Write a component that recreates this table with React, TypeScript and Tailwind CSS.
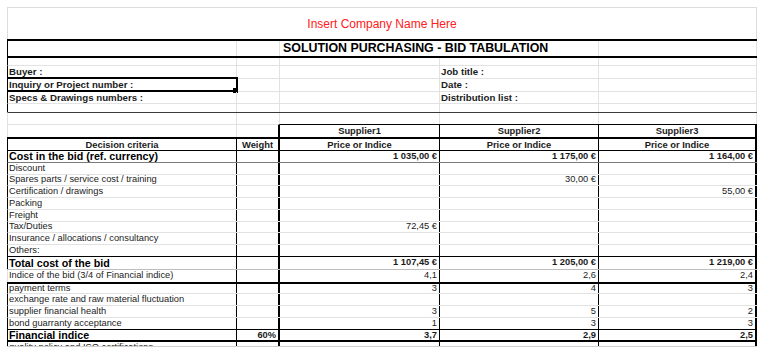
import type { ReactNode } from "react";

const COLS = "grid grid-cols-[229px_43px_160px_159px_158px]";

// gridline / border shorthands
const gT = "border-t border-t-[#e2e2e2]";
const gR = "border-r border-r-[#e2e2e2]";
const bR = "border-r border-r-black";
const bR2 = "border-r-2 border-r-black";
const gL = "border-l border-l-[#e2e2e2]";
const bL = "border-l border-l-black";

interface RowProps {
  h: string;
  top?: string;
  left: string;
  children: ReactNode;
}

const Row = ({ h, top = "", left, children }: RowProps) => (
  <div className={`${COLS} w-[750px] ${h} ${top} ${left}`}>{children}</div>
);

interface CellProps {
  className?: string;
  children?: ReactNode;
}

const Cell = ({ className = "", children }: CellProps) => (
  <div className={`flex items-center whitespace-nowrap leading-none min-w-0 ${className}`}>
    {children}
  </div>
);

interface DataRow {
  label: string;
  section?: boolean;
  h: string;
  top: string;
  left?: string;
  weight?: string;
  vals: string[];
}

const none = ["", "", ""];

const rows: DataRow[] = [
  {
    label: "Cost in the bid (ref. currency)",
    section: true,
    h: "h-[12px]",
    top: "border-t border-t-black",
    vals: ["1 035,00 €", "1 175,00 €", "1 164,00 €"],
  },
  { label: "Discount", h: "h-[12px]", top: "border-t border-t-[#7a7a7a]", vals: none },
  { label: "Spares parts / service cost / training", h: "h-[11px]", top: gT, vals: ["", "30,00 €", ""] },
  { label: "Certification / drawings", h: "h-[12px]", top: gT, vals: ["", "", "55,00 €"] },
  { label: "Packing", h: "h-[12px]", top: gT, vals: none },
  { label: "Freight", h: "h-[12px]", top: gT, vals: none },
  { label: "Tax/Duties", h: "h-[11px]", top: gT, vals: ["72,45 €", "", ""] },
  { label: "Insurance / allocations / consultancy", h: "h-[12px]", top: gT, vals: none },
  { label: "Others:", h: "h-[12px]", top: gT, vals: none },
  {
    label: "Total cost of the bid",
    section: true,
    h: "h-[13px]",
    top: "border-t border-t-black",
    vals: ["1 107,45 €", "1 205,00 €", "1 219,00 €"],
  },
  {
    label: "Indice of the bid (3/4 of Financial indice)",
    h: "h-[13px]",
    top: "border-t border-t-[#bdbdbd]",
    left: gL,
    vals: ["4,1", "2,6", "2,4"],
  },
  { label: "payment terms", h: "h-[11px]", top: "border-t-2 border-t-black", vals: ["3", "4", "3"] },
  { label: "exchange rate and raw material fluctuation", h: "h-[12px]", top: gT, vals: none },
  { label: "supplier financial health", h: "h-[12px]", top: gT, vals: ["3", "5", "2"] },
  { label: "bond guarranty acceptance", h: "h-[12px]", top: gT, vals: ["1", "3", "3"] },
  {
    label: "Financial indice",
    section: true,
    h: "h-[11px]",
    top: "border-t border-t-black",
    weight: "60%",
    vals: ["3,7", "2,9", "2,5"],
  },
  { label: "quality policy and ISO certifications", h: "h-[13px]", top: "border-t-2 border-t-black", vals: none },
];

const valRight = [bR, bR, bR2];

const App = () => {
  return (
    <div className="w-[768px] h-[350px] bg-white overflow-hidden pt-[7px] pl-[7px] font-['Liberation_Sans',Arial,sans-serif] text-[#1b1b1b]">
      <div className="w-[750px] h-[340px] overflow-hidden border-b border-b-[#cfcfcf]">
        {/* Company name */}
        <Row h="h-[32px]" top="border-t border-t-[#dcdcdc]" left="border-l border-l-[#dcdcdc]">
          <Cell className="col-span-5 justify-center border-r border-r-[#dcdcdc] text-[12px] text-[#ff2020]">
            Insert Company Name Here
          </Cell>
        </Row>

        {/* Title */}
        <Row h="h-[17px]" top="border-t-2 border-t-black" left={bL}>
          <Cell className={gR} />
          <Cell className={gR} />
          <Cell className={`col-span-2 pl-[3px] font-bold text-[12.4px] text-black ${gR}`}>
            SOLUTION PURCHASING - BID TABULATION
          </Cell>
          <Cell className={gR} />
        </Row>

        {/* Info block */}
        <Row h="h-[9px]" top="border-t-2 border-t-black" left={bL}>
          <Cell className={gR} />
          <Cell className={gR} />
          <Cell className={gR} />
          <Cell className={gR} />
          <Cell className={gR} />
        </Row>
        {[
          ["Buyer :", "Job title :", "h-[13px]"],
          ["Inquiry or Project number :", "Date :", "h-[13px]"],
          ["Specs & Drawings numbers :", "Distribution list :", "h-[12px]"],
          ["", "", "h-[9px]"],
        ].map(([a, d, h], i) => (
          <Row key={i} h={h} top={gT} left={bL}>
            <Cell className={`relative pl-[1px] font-bold text-[9.7px] ${gR}`}>
              {a}
              {i === 1 && (
                <>
                  <div className="absolute -left-[2px] -top-[2px] w-[232px] h-[15px] border-2 border-black" />
                  <div className="absolute left-[225px] top-[9px] w-[5px] h-[5px] bg-black" />
                </>
              )}
            </Cell>
            <Cell className={gR} />
            <Cell className={gR} />
            <Cell className={`pl-[1px] font-bold text-[9.7px] ${gR}`}>{d}</Cell>
            <Cell className={gR} />
          </Row>
        ))}
        <Row h="h-[12px]" top="border-t border-t-[#3a3a3a]" left={gL}>
          <Cell className={gR} />
          <Cell className={gR} />
          <Cell className={gR} />
          <Cell className={gR} />
          <Cell className={gR} />
        </Row>

        {/* Supplier header */}
        <Row h="h-[13px]" left={gL}>
          <Cell className={`${gT} ${gR}`} />
          <Cell className={`${gT} ${bR2}`} />
          {["Supplier1", "Supplier2", "Supplier3"].map((s, i) => (
            <Cell
              key={s}
              className={`justify-center border-t border-t-black font-bold text-[9.4px] ${i === 2 ? bR2 : bR}`}
            >
              {s}
            </Cell>
          ))}
        </Row>

        {/* Column header */}
        <Row h="h-[13px]" top="border-t-2 border-t-black" left={bL}>
          <Cell className={`justify-center font-bold text-[9.4px] ${bR}`}>Decision criteria</Cell>
          <Cell className={`justify-center font-bold text-[9.4px] ${bR2}`}>Weight</Cell>
          {valRight.map((r, i) => (
            <Cell key={i} className={`justify-center font-bold text-[9.4px] ${r}`}>
              Price or Indice
            </Cell>
          ))}
        </Row>

        {/* Criteria rows */}
        {rows.map((row) => (
          <Row key={row.label} h={row.h} top={row.top} left={row.left ?? bL}>
            <Cell
              className={`pl-[1px] ${bR} ${
                row.section ? "font-bold text-[10.7px] text-black" : "text-[9.3px] text-[#222]"
              }`}
            >
              {row.label}
            </Cell>
            <Cell className={`justify-end pr-[2px] font-bold text-[9.3px] ${bR2}`}>{row.weight}</Cell>
            {row.vals.map((v, i) => (
              <Cell
                key={i}
                className={`justify-end pr-[2px] text-[9.3px] ${row.section ? "font-bold" : ""} ${valRight[i]}`}
              >
                {v}
              </Cell>
            ))}
          </Row>
        ))}
      </div>
    </div>
  );
};

export default App;
